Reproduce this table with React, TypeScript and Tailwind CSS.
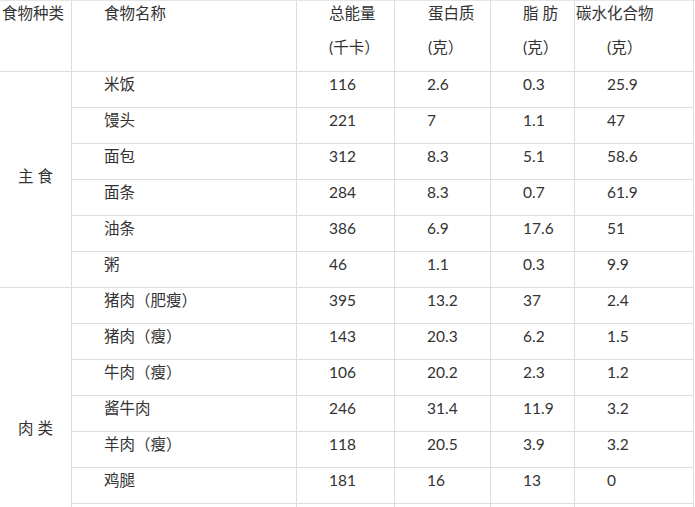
import React from "react";

const staple = [
  ["米饭", "116", "2.6", "0.3", "25.9"],
  ["馒头", "221", "7", "1.1", "47"],
  ["面包", "312", "8.3", "5.1", "58.6"],
  ["面条", "284", "8.3", "0.7", "61.9"],
  ["油条", "386", "6.9", "17.6", "51"],
  ["粥", "46", "1.1", "0.3", "9.9"],
];
const meat = [
  ["猪肉（肥瘦）", "395", "13.2", "37", "2.4"],
  ["猪肉（瘦）", "143", "20.3", "6.2", "1.5"],
  ["牛肉（瘦）", "106", "20.2", "2.3", "1.2"],
  ["酱牛肉", "246", "31.4", "11.9", "3.2"],
  ["羊肉（瘦）", "118", "20.5", "3.9", "3.2"],
  ["鸡腿", "181", "16", "13", "0"],
  ["", "", "", "", ""],
  ["", "", "", "", ""],
];

const cell = "border-r border-b border-[#dcdcdc] h-[36px] pl-[32px] pt-[2px] leading-[20px]";

function Group({ rows }: { rows: string[][] }) {
  return (
    <>
      {rows.map((r, i) => (
        <React.Fragment key={i}>
          {r.map((v, j) => (
            <div key={j} className={cell} style={{ gridColumnStart: j + 2 }}>
              {v}
            </div>
          ))}
        </React.Fragment>
      ))}
    </>
  );
}

export default function App() {
  return (
    <div
      className="w-[695px] h-[507px] overflow-hidden bg-white text-[#333333] text-[15.5px]"
      style={{ fontFamily: '"Lato", "Noto Sans CJK SC", sans-serif' }}
    >
      <div className="grid grid-cols-[72px_225px_98px_96px_84px_119px] border-t border-[#e6e6e6]">
        <div className="border-r border-b border-[#dcdcdc] h-[71px] pl-[2px] pt-[2px] leading-[20px] whitespace-nowrap">食物种类</div>
        <div className="border-r border-b border-[#dcdcdc] h-[71px] pl-[32px] pt-[2px] leading-[20px]">食物名称</div>
        <div className="border-r border-b border-[#dcdcdc] h-[71px] pl-[32px] pt-[2px] leading-[20px] flex flex-col gap-[14px]">
          <span>总能量</span>
          <span>(千卡）</span>
        </div>
        <div className="border-r border-b border-[#dcdcdc] h-[71px] pl-[33px] pt-[2px] leading-[20px] flex flex-col gap-[14px]">
          <span>蛋白质</span>
          <span>(克）</span>
        </div>
        <div className="border-r border-b border-[#dcdcdc] h-[71px] pl-[32px] pt-[2px] leading-[20px] flex flex-col gap-[14px]">
          <span>脂 肪</span>
          <span>(克）</span>
        </div>
        <div className="border-r border-b border-[#dcdcdc] h-[71px] pl-[1px] pt-[2px] leading-[20px] flex flex-col gap-[14px] whitespace-nowrap">
          <span>碳水化合物</span>
          <span className="pl-[31px]">(克）</span>
        </div>

        <div className="row-span-6 col-start-1 border-r border-b border-[#dcdcdc] flex items-center justify-center pb-[6px]">
          主 食
        </div>
        <Group rows={staple} />

        <div className="row-span-8 col-start-1 border-r border-b border-[#dcdcdc] flex items-center justify-center pb-[6px]">
          肉 类
        </div>
        <Group rows={meat} />
      </div>
    </div>
  );
}
